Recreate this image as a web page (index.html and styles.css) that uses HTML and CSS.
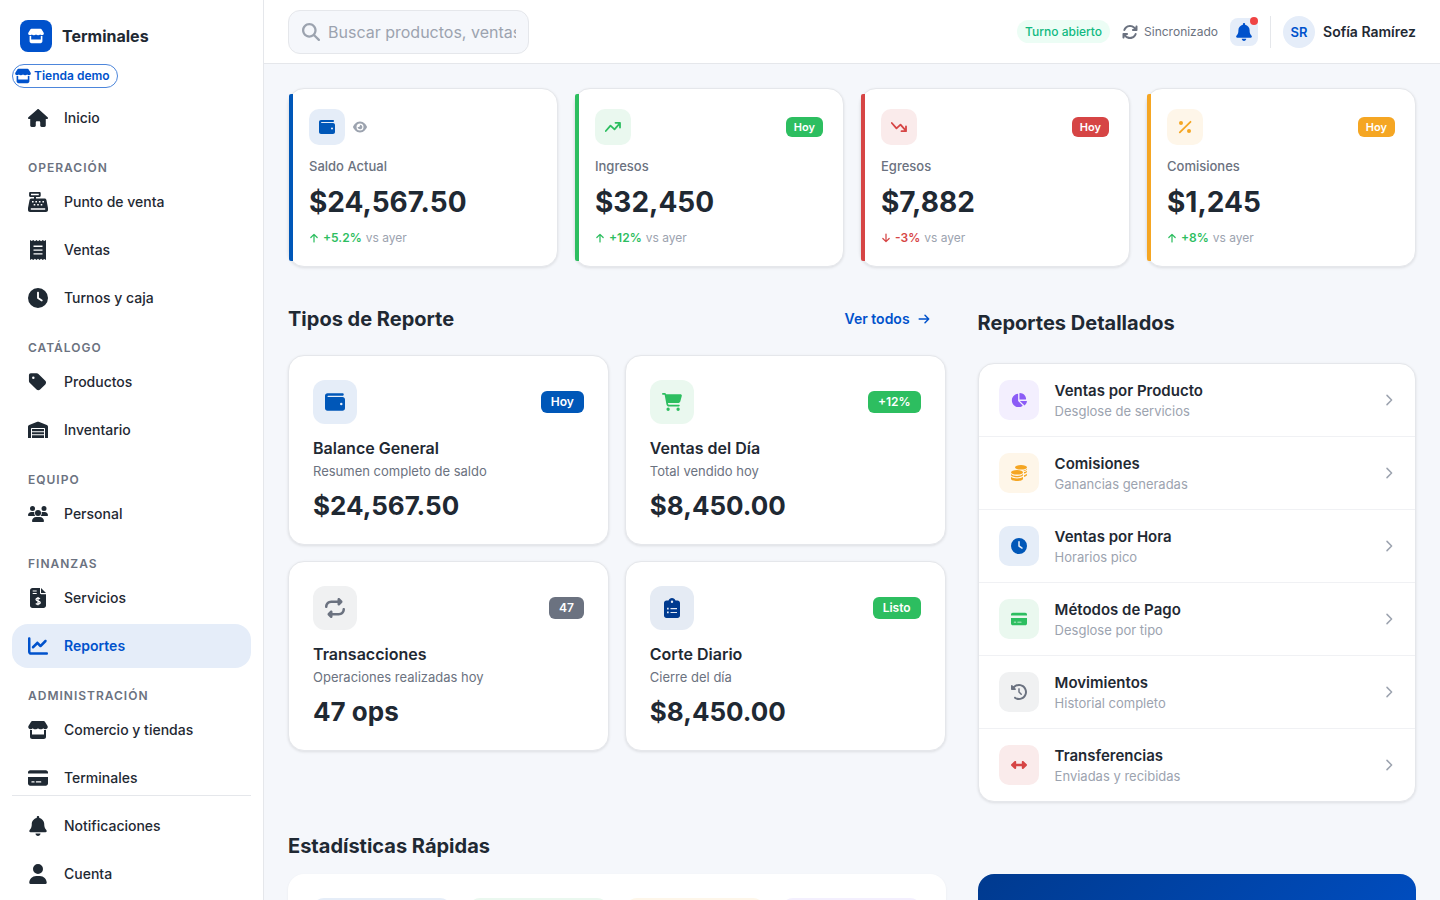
FILE: index.html
```html
<!DOCTYPE html>
<html lang="es">
<head>
    <meta charset="UTF-8">
    <meta name="viewport" content="width=device-width, initial-scale=1.0">
    <title>Reportes - Terminales</title>
    <link rel="stylesheet" href="styles.css">
</head>
<body>
    <!-- Icon sprite -->
    <svg class="sprite" aria-hidden="true">
        <symbol id="i-store" viewBox="0 0 20 20"><path fill-rule="evenodd" d="M4.3 1h11.4c.5 0 1 .3 1.2.7l2.5 4c1 1.700-.1 3.500-2 3.500-.9 0-1.700-.4-2.200-1-.5.6-1.300 1-2.500 1s-2-.4-2.700-1c-.7.6-1.500 1-2.700 1s-2-.4-2.500-1c-.5.6-1.300 1-2.200 1C.7 9.200-.4 7.400.6 5.700l2.500-4c.2-.4.7-.7 1.200-.7zM2 10h2v4.500h12V10h2v6.700c0 1.300-1 2.300-2.300 2.300H4.300C3 19 2 18 2 16.700z"/></symbol>
        <symbol id="i-home" viewBox="0 0 576 512"><path d="M575.8 255.500c0 18-15 32.100-32 32.100l-32 0 .7 160.200c0 2.700-.2 5.400-.5 8.100l0 16.200c0 22.100-17.900 40-40 40l-16 0c-1.100 0-2.200 0-3.300-.1c-1.400 .1-2.800 .1-4.200 .1L416 512l-24 0c-22.100 0-40-17.900-40-40l0-24 0-64c0-17.700-14.300-32-32-32l-64 0c-17.700 0-32 14.300-32 32l0 64 0 24c0 22.100-17.900 40-40 40l-24 0-31.900 0c-1.500 0-3-.1-4.500-.2c-1.200 .1-2.400 .2-3.600 .2l-16 0c-22.100 0-40-17.900-40-40l0-112c0-.9 0-1.900 .1-2.800l0-69.700-32 0c-18 0-32-14-32-32.100c0-9 3-17 10-24L266.400 8c7-7 15-8 22-8s15 2 21 7L564.800 231.500c8 7 12 15 11 24z"/></symbol>
        <symbol id="i-register" viewBox="0 0 20 20"><path fill-rule="evenodd" d="M2.300 0h9.200c.7 0 1.200.5 1.200 1.200v2.600c0 .7-.5 1.200-1.200 1.200H8v1.500h8.500c1 0 1.800.7 2 1.700l1.400 7.300c.1.400.1.700.1 1V18c0 1.100-.9 2-2 2H2c-1.100 0-2-.9-2-2v-1.500c0-.3 0-.6.1-1l1.400-7.300c.2-1 1-1.700 2-1.700H6V5H2.300c-.7 0-1.200-.5-1.200-1.200V1.200C1.100.5 1.600 0 2.300 0zm.7 1.800v1.400h7.800V1.800zM2.800 16.300v1.500h14.400v-1.500zM4 9v1.500h1.600V9zm3.400 0v1.500H9V9zm3.500 0v1.500h1.600V9zm3.500 0v1.500H16V9zM5.700 12v1.500h1.600V12zm3.500 0v1.500h1.600V12zm3.500 0v1.500h1.600V12z"/></symbol>
        <symbol id="i-receipt" viewBox="0 0 20 20"><path fill-rule="evenodd" d="M2 0l1.700 1L5.300 0l1.600 1.300L8.500 0 10 1.300 11.500 0l1.600 1.300L14.700 0l1.600 1L18 0v20l-1.700-1-1.600 1-1.600-1.300-1.600 1.300-1.500-1.300L8.500 20l-1.600-1.300L5.300 20l-1.600-1L2 20zM5.500 5.600v1.300h9V5.600zm0 3.800v1.300h9V9.400zm0 3.800v1.300h9v-1.300z"/></symbol>
        <symbol id="i-clock" viewBox="0 0 512 512"><path d="M256 0a256 256 0 1 1 0 512A256 256 0 1 1 256 0zM232 120l0 136c0 8 4 15.500 10.700 20l96 64c11 7.400 25.900 4.400 33.300-6.700s4.400-25.900-6.700-33.300L280 243.200 280 120c0-13.300-10.700-24-24-24s-24 10.700-24 24z"/></symbol>
        <symbol id="i-tag" viewBox="-24 0 512 512"><path d="M0 80L0 229.500c0 17 6.700 33.300 18.700 45.300l176 176c25 25 65.500 25 90.500 0L418.700 317.300c25-25 25-65.500 0-90.500l-176-176c-12-12-28.300-18.700-45.300-18.700L48 32C21.500 32 0 53.500 0 80zm112 32a32 32 0 1 1 0 64 32 32 0 1 1 0-64z"/></symbol>
        <symbol id="i-warehouse" viewBox="0 0 20 20"><path d="M0 18V6.800C0 6 .5 5.300 1.200 5l8.100-3.200c.5-.2 1-.2 1.400 0L18.800 5c.7.300 1.200 1 1.200 1.800V18h-3V9c0-.6-.4-1-1-1H4c-.6 0-1 .4-1 1v9z"/><path d="M4 9h12v2.300H4zM4 12.300h12v2H4zM4 15.300h12V18H4z"/></symbol>
        <symbol id="i-users" viewBox="0 0 20 20"><circle cx="4.500" cy="4.500" r="2.500"/><circle cx="16" cy="4.500" r="2.500"/><circle cx="10" cy="9" r="3"/><path d="M3.300 8h2.500c.1 0 .4 0 .6.100C6 9.500 6.300 11 7.300 12H.7c-.4 0-.7-.3-.7-.7C0 9.500 1.500 8 3.300 8zM16.700 8c1.800 0 3.300 1.500 3.300 3.300 0 .4-.3.7-.7.7h-6.600c1-1 1.300-2.500.9-3.900.2-.1.500-.1.700-.1zM8.200 13h3.600c2.300 0 4.200 1.900 4.200 4.200 0 .5-.4.8-.8.800H4.800c-.4 0-.8-.3-.8-.8C4 14.900 5.900 13 8.200 13z"/></symbol>
        <symbol id="i-invoice" viewBox="0 0 20 20"><path fill-rule="evenodd" d="M4.500 0H12v5c0 .7.500 1.200 1.200 1.200H18v11.300c0 1.400-1.100 2.500-2.500 2.500h-11C3.100 20 2 18.900 2 17.500v-15C2 1.100 3.100 0 4.500 0zM4.700 2.400v1.200h4V2.400zm0 2.500v1.200h4V4.900z"/><path d="M13 0l5 5h-5z"/><path class="cut" d="M12 10.700c-.5-.4-1.200-.6-2-.6-1.200 0-2 .5-2 1.400 0 2.100 4.200 1 4.200 3.100 0 .9-.9 1.500-2.200 1.500-.9 0-1.700-.3-2.200-.7M10 9v8.300"/></symbol>
        <symbol id="i-chart" viewBox="0 0 512 512"><path d="M64 64c0-17.700-14.300-32-32-32S0 46.300 0 64L0 400c0 44.200 35.800 80 80 80l400 0c17.700 0 32-14.300 32-32s-14.300-32-32-32L80 416c-8.800 0-16-7.200-16-16L64 64zm406.600 86.600c12.500-12.500 12.500-32.800 0-45.300s-32.800-12.500-45.300 0L320 210.700l-57.400-57.400c-12.500-12.500-32.800-12.500-45.300 0l-112 112c-12.500 12.500-12.500 32.800 0 45.300s32.800 12.500 45.300 0L240 221.300l57.400 57.400c12.500 12.500 32.800 12.500 45.300 0l128-128z"/></symbol>
        <symbol id="i-card" viewBox="0 0 576 512"><path d="M64 32C28.700 32 0 60.700 0 96l0 32 576 0 0-32c0-35.300-28.700-64-64-64L64 32zM576 224L0 224 0 416c0 35.300 28.700 64 64 64l448 0c35.300 0 64-28.700 64-64l0-192zM112 352l64 0c8.800 0 16 7.200 16 16s-7.200 16-16 16l-64 0c-8.800 0-16-7.200-16-16s7.200-16 16-16zm112 16c0-8.800 7.200-16 16-16l128 0c8.800 0 16 7.200 16 16s-7.200 16-16 16l-128 0c-8.800 0-16-7.200-16-16z"/></symbol>
        <symbol id="i-bell" viewBox="0 0 448 512"><path d="M224 0c-17.700 0-32 14.300-32 32l0 19.200C119 66 64 130.600 64 208l0 18.800c0 47-17.300 92.400-48.500 127.600l-7.400 8.300c-8.400 9.400-10.400 22.900-5.300 34.400S19.400 416 32 416l384 0c12.600 0 24-7.400 29.200-18.900s3.100-25-5.300-34.400l-7.400-8.300C401.300 319.200 384 273.900 384 226.800l0-18.800c0-77.400-55-142-128-156.800L256 32c0-17.700-14.300-32-32-32zm45.300 493.300c12-12 18.700-28.300 18.700-45.300l-64 0-64 0c0 17 6.700 33.300 18.700 45.300s28.300 18.700 45.300 18.700s33.300-6.700 45.300-18.700z"/></symbol>
        <symbol id="i-user" viewBox="0 0 448 512"><path d="M224 256A128 128 0 1 0 224 0a128 128 0 1 0 0 256zm-45.700 48C79.800 304 0 383.800 0 482.300C0 498.700 13.300 512 29.700 512l388.600 0c16.400 0 29.700-13.300 29.700-29.700C448 383.800 368.200 304 269.700 304l-91.400 0z"/></symbol>
        <symbol id="i-search" viewBox="0 0 512 512"><path d="M416 208c0 45.900-14.900 88.300-40 122.700L502.600 457.400c12.500 12.500 12.500 32.800 0 45.300s-32.800 12.500-45.300 0L330.700 376c-34.400 25.200-76.800 40-122.700 40C93.100 416 0 322.900 0 208S93.100 0 208 0S416 93.100 416 208zM208 352a144 144 0 1 0 0-288 144 144 0 1 0 0 288z"/></symbol>
        <symbol id="i-sync" viewBox="0 0 512 512"><path d="M105.100 202.600c7.700-21.800 20.200-42.300 37.800-59.800c62.500-62.500 163.800-62.500 226.300 0L386.300 160 352 160c-17.700 0-32 14.300-32 32s14.300 32 32 32l111.900 0c17.700 0 32-14.300 32-32l0-112c0-17.700-14.300-32-32-32s-32 14.300-32 32l0 35.200L414.400 97.600c-87.500-87.500-229.300-87.500-316.800 0C73.200 122 55.600 150.700 44.800 181.400c-5.900 16.700 2.900 34.900 19.500 40.800s34.900-2.900 40.800-19.500zM39 289.300c-5 1.500-9.800 4.200-13.700 8.200c-4 4-6.700 8.800-8.100 14c-.3 1.200-.6 2.500-.8 3.800c-.3 1.700-.4 3.400-.4 5.100L16 432c0 17.700 14.300 32 32 32s32-14.300 32-32l0-35.100 17.600 17.500c87.500 87.400 229.300 87.400 316.700 0c24.400-24.400 42.100-53.100 52.900-83.800c5.900-16.700-2.900-34.900-19.500-40.800s-34.900 2.900-40.800 19.500c-7.700 21.800-20.200 42.300-37.800 59.800c-62.500 62.500-163.800 62.500-226.300 0l-.1-.1L125.600 352l34.400 0c17.700 0 32-14.300 32-32s-14.300-32-32-32L48.400 288c-1.600 0-3.200 .1-4.800 .3s-3.100 .5-4.600 1z"/></symbol>
        <symbol id="i-wallet" viewBox="0 0 512 512"><path d="M64 32C28.700 32 0 60.700 0 96L0 416c0 35.300 28.700 64 64 64l384 0c35.300 0 64-28.700 64-64l0-224c0-35.300-28.700-64-64-64L80 128c-8.800 0-16-7.200-16-16s7.200-16 16-16l368 0c17.700 0 32-14.300 32-32s-14.300-32-32-32L64 32zM416 272a32 32 0 1 1 0 64 32 32 0 1 1 0-64z"/></symbol>
        <symbol id="i-eye" viewBox="0 0 576 512"><path d="M288 32c-80.800 0-145.500 36.800-192.600 80.600C48.600 156 17.300 208 2.500 243.700c-3.300 7.900-3.300 16.700 0 24.600C17.300 304 48.600 356 95.400 399.400C142.500 443.200 207.200 480 288 480s145.500-36.800 192.600-80.600c46.800-43.500 78.100-95.400 93-131.100c3.300-7.900 3.300-16.700 0-24.600c-14.900-35.700-46.200-87.700-93-131.100C433.500 68.800 368.800 32 288 32zM144 256a144 144 0 1 1 288 0 144 144 0 1 1 -288 0zm144-64c0 35.300-28.700 64-64 64c-7.100 0-13.900-1.200-20.300-3.300c-5.500-1.800-11.900 1.600-11.700 7.400c.3 6.900 1.300 13.800 3.200 20.700c13.700 51.200 66.400 81.600 117.600 67.900s81.600-66.400 67.900-117.600c-11.100-41.500-47.800-69.400-88.600-71.100c-5.800-.2-9.200 6.100-7.400 11.700c2.100 6.400 3.300 13.200 3.300 20.300z"/></symbol>
        <symbol id="i-up" viewBox="0 0 16 16"><path class="line" d="M.8 12l4.700-5.300 4 3.600L15 4.200M10.500 3.800H15v4.700"/></symbol>
        <symbol id="i-down" viewBox="0 0 16 16"><path class="line" d="M.8 4l4.700 5.300 4-3.600L15 11.800M10.500 12.200H15V7.500"/></symbol>
        <symbol id="i-percent" viewBox="0 0 16 16"><path class="line" d="M13.500 2.800L2.800 13.400"/><circle cx="4" cy="4" r="2"/><circle cx="12" cy="12" r="2"/></symbol>
        <symbol id="i-arrow-up" viewBox="0 0 12 12"><path class="line-sm" d="M6 10.700V2M2.200 5.400L6 1.600l3.800 3.800"/></symbol>
        <symbol id="i-arrow-down" viewBox="0 0 12 12"><path class="line-sm" d="M6 1.300V10M2.200 6.600L6 10.400l3.800-3.800"/></symbol>
        <symbol id="i-arrow-right" viewBox="0 0 12 12"><path class="line-sm" d="M1.200 6h9.500M7 2.300L10.700 6 7 9.700"/></symbol>
        <symbol id="i-chevron" viewBox="0 0 12 12"><path class="line-sm" d="M4 1.400L8.600 6 4 10.600"/></symbol>
        <symbol id="i-cart" viewBox="0 0 576 512"><path d="M0 24C0 10.700 10.700 0 24 0L69.500 0c22 0 41.500 12.800 50.600 32l411 0c26.300 0 45.500 25 38.600 50.400l-41 152.300c-8.500 31.400-37 53.300-69.500 53.300l-288.500 0 5.400 28.500c2.200 11.300 12.100 19.500 23.600 19.500L488 336c13.300 0 24 10.700 24 24s-10.700 24-24 24l-288.300 0c-34.600 0-64.300-24.600-70.700-58.500L77.400 54.500c-.7-3.800-4-6.500-7.900-6.500L24 48C10.700 48 0 37.300 0 24zM128 464a48 48 0 1 1 96 0 48 48 0 1 1 -96 0zm336-48a48 48 0 1 1 0 96 48 48 0 1 1 0-96z"/></symbol>
        <symbol id="i-repeat" viewBox="0 0 512 512"><path d="M0 224c0 17.700 14.300 32 32 32s32-14.300 32-32c0-53 43-96 96-96l160 0 0 32c0 12.900 7.800 24.600 19.800 29.600s25.700 2.200 34.900-6.900l64-64c12.500-12.500 12.500-32.800 0-45.300l-64-64c-9.200-9.200-22.900-11.900-34.900-6.900S320 19.100 320 32l0 32L160 64C71.600 64 0 135.600 0 224zm512 64c0-17.700-14.300-32-32-32s-32 14.300-32 32c0 53-43 96-96 96l-160 0 0-32c0-12.900-7.800-24.600-19.800-29.600s-25.700-2.200-34.900 6.900l-64 64c-12.500 12.500-12.500 32.800 0 45.300l64 64c9.200 9.200 22.900 11.900 34.900 6.900s19.800-16.600 19.800-29.600l0-32 160 0c88.400 0 160-71.600 160-160z"/></symbol>
        <symbol id="i-clipboard" viewBox="0 0 20 20"><path fill-rule="evenodd" d="M10 0c1.600 0 3 1 3.500 2.500h2C16.900 2.500 18 3.600 18 5v12.500c0 1.400-1.100 2.500-2.500 2.500h-11C3.100 20 2 18.900 2 17.500V5c0-1.400 1.100-2.500 2.500-2.500h2C7 1 8.400 0 10 0zm0 2.500a1.200 1.200 0 1 0 0 2.400 1.200 1.200 0 1 0 0-2.400zM5 9.700v1.700h1.700V9.700zm3.500.3v1.200H15V10zM5 13.600v1.700h1.700v-1.700zm3.500.3v1.200H15v-1.200z"/></symbol>
        <symbol id="i-pie" viewBox="0 0 576 512"><path d="M304 240l0-223.400c0-9 7-16.600 16-16.600C443.700 0 544 100.300 544 224c0 9-7.600 16-16.600 16L304 240zM32 272C32 150.700 122.100 50.300 239 34.300c9.200-1.300 17 6.100 17 15.400L256 288 412.500 444.500c6.700 6.700 6.200 17.700-1.500 23.100C371.800 495.600 323.800 512 272 512C139.500 512 32 404.600 32 272zm526.400 16c9.300 0 16.600 7.800 15.400 17c-7.700 55.900-34.600 105.600-73.900 142.300c-6 5.600-15.400 5.200-21.200-.7L320 288l238.400 0z"/></symbol>
        <symbol id="i-coins" viewBox="0 0 16 16"><ellipse cx="10" cy="2.300" rx="6" ry="2.300"/><ellipse cx="6" cy="7.300" rx="6" ry="2.300"/><path d="M0 9c1 1.300 3.300 1.900 6 1.900S11 10.300 12 9v1c0 1.200-2.700 2.200-6 2.200S0 11.200 0 10zM0 11.700c1 1.100 3.300 1.700 6 1.700s5-.6 6-1.700v2C12 15 9.300 16 6 16s-6-1-6-2.300zM13 7.100c1.300-.3 2.400-.8 3-1.400v1c0 .8-1.200 1.500-3 1.900zM13 10.200c1.300-.3 2.400-.8 3-1.400v1.200c0 .8-1.200 1.500-3 1.900zM12.300 5.700C13.900 5.300 15.400 4.700 16 3.800v.5c0 .7-1.200 1.500-3 1.900z"/></symbol>
        <symbol id="i-history" viewBox="0 0 512 512"><path d="M75 75L41 41C25.900 25.900 0 36.600 0 57.900L0 168c0 13.300 10.700 24 24 24l110.100 0c21.400 0 32.100-25.900 17-41l-30.800-30.800C155 85.500 203 64 256 64c106 0 192 86 192 192s-86 192-192 192c-40.800 0-78.600-12.700-109.700-34.400c-14.500-10.100-34.400-6.600-44.600 7.900s-6.600 34.400 7.900 44.600C151.200 495 201.700 512 256 512c141.400 0 256-114.600 256-256S397.400 0 256 0C185.300 0 121.300 28.700 75 75zm181 53c-13.300 0-24 10.700-24 24l0 104c0 6.400 2.500 12.500 7 17l72 72c9.400 9.400 24.600 9.400 33.900 0s9.400-24.600 0-33.900l-65-65 0-94.100c0-13.300-10.700-24-24-24z"/></symbol>
        <symbol id="i-transfer" viewBox="0 0 16 16"><path d="M4.600 4.100c.4.100.6.500.6.900v1.800h5.600V5c0-.4.200-.8.600-.9.400-.2.800-.1 1.100.2l3.200 3c.4.400.4 1 0 1.400l-3.200 3c-.3.300-.7.400-1.100.2-.4-.1-.6-.5-.6-.9V9.200H5.200V11c0 .4-.2.800-.6.900-.4.200-.8.100-1.100-.2l-3.200-3c-.4-.4-.4-1 0-1.400l3.200-3c.3-.3.700-.4 1.100-.2z"/></symbol>
    </svg>

    <div class="app">
        <aside class="sidebar">
            <div class="brand">
                <span class="brand-logo"><svg class="icon icon-16"><use href="#i-store"/></svg></span>
                <span class="brand-name">Terminales</span>
            </div>
            <button type="button" class="store-pill">
                <svg class="icon icon-16"><use href="#i-store"/></svg>
                <span>Tienda demo</span>
            </button>

            <nav class="nav" aria-label="Principal">
                <a href="#" class="nav-item"><svg class="icon icon-20"><use href="#i-home"/></svg>Inicio</a>

                <h3 class="nav-title">Operación</h3>
                <a href="#" class="nav-item"><svg class="icon icon-20"><use href="#i-register"/></svg>Punto de venta</a>
                <a href="#" class="nav-item"><svg class="icon icon-20"><use href="#i-receipt"/></svg>Ventas</a>
                <a href="#" class="nav-item"><svg class="icon icon-20"><use href="#i-clock"/></svg>Turnos y caja</a>

                <h3 class="nav-title">Catálogo</h3>
                <a href="#" class="nav-item"><svg class="icon icon-20"><use href="#i-tag"/></svg>Productos</a>
                <a href="#" class="nav-item"><svg class="icon icon-20"><use href="#i-warehouse"/></svg>Inventario</a>

                <h3 class="nav-title">Equipo</h3>
                <a href="#" class="nav-item"><svg class="icon icon-20"><use href="#i-users"/></svg>Personal</a>

                <h3 class="nav-title">Finanzas</h3>
                <a href="#" class="nav-item"><svg class="icon icon-20"><use href="#i-invoice"/></svg>Servicios</a>
                <a href="#" class="nav-item active" aria-current="page"><svg class="icon icon-20"><use href="#i-chart"/></svg>Reportes</a>

                <h3 class="nav-title">Administración</h3>
                <a href="#" class="nav-item"><svg class="icon icon-20"><use href="#i-store"/></svg>Comercio y tiendas</a>
                <a href="#" class="nav-item"><svg class="icon icon-20"><use href="#i-card"/></svg>Terminales</a>
            </nav>

            <div class="nav-footer">
                <a href="#" class="nav-item"><svg class="icon icon-20"><use href="#i-bell"/></svg>Notificaciones</a>
                <a href="#" class="nav-item"><svg class="icon icon-20"><use href="#i-user"/></svg>Cuenta</a>
            </div>
        </aside>

        <div class="main">
            <header class="topbar">
                <label class="search">
                    <svg class="icon icon-18"><use href="#i-search"/></svg>
                    <input type="text" class="search-input" aria-label="Buscar" placeholder="Buscar productos, ventas...">
                </label>
                <div class="topbar-right">
                    <span class="shift">Turno abierto</span>
                    <span class="sync"><svg class="icon icon-16"><use href="#i-sync"/></svg>Sincronizado</span>
                    <button type="button" class="bell" aria-label="Notificaciones">
                        <svg class="icon icon-18"><use href="#i-bell"/></svg>
                        <span class="bell-dot"></span>
                    </button>
                    <button type="button" class="profile">
                        <span class="avatar">SR</span>
                        <span class="profile-name">Sofía Ramírez</span>
                    </button>
                </div>
            </header>

            <main class="content">
                <section class="kpis">
                    <article class="kpi kpi-blue">
                        <div class="card-top">
                            <span class="tile tile-36 blue"><svg class="icon icon-16"><use href="#i-wallet"/></svg></span>
                            <button type="button" class="eye" aria-label="Ocultar saldo"><svg class="icon icon-14"><use href="#i-eye"/></svg></button>
                        </div>
                        <p class="kpi-label">Saldo Actual</p>
                        <p class="kpi-value">$24,567.50</p>
                        <p class="kpi-change"><svg class="icon icon-10 up"><use href="#i-arrow-up"/></svg><b class="up">+5.2%</b>vs ayer</p>
                    </article>
                    <article class="kpi kpi-green">
                        <div class="card-top">
                            <span class="tile tile-36 green"><svg class="icon icon-16"><use href="#i-up"/></svg></span>
                            <span class="badge badge-sm bg-green">Hoy</span>
                        </div>
                        <p class="kpi-label">Ingresos</p>
                        <p class="kpi-value">$32,450</p>
                        <p class="kpi-change"><svg class="icon icon-10 up"><use href="#i-arrow-up"/></svg><b class="up">+12%</b>vs ayer</p>
                    </article>
                    <article class="kpi kpi-red">
                        <div class="card-top">
                            <span class="tile tile-36 red"><svg class="icon icon-16"><use href="#i-down"/></svg></span>
                            <span class="badge badge-sm bg-red">Hoy</span>
                        </div>
                        <p class="kpi-label">Egresos</p>
                        <p class="kpi-value">$7,882</p>
                        <p class="kpi-change"><svg class="icon icon-10 down"><use href="#i-arrow-down"/></svg><b class="down">-3%</b>vs ayer</p>
                    </article>
                    <article class="kpi kpi-orange">
                        <div class="card-top">
                            <span class="tile tile-36 orange"><svg class="icon icon-16"><use href="#i-percent"/></svg></span>
                            <span class="badge badge-sm bg-orange">Hoy</span>
                        </div>
                        <p class="kpi-label">Comisiones</p>
                        <p class="kpi-value">$1,245</p>
                        <p class="kpi-change"><svg class="icon icon-10 up"><use href="#i-arrow-up"/></svg><b class="up">+8%</b>vs ayer</p>
                    </article>
                </section>

                <div class="columns">
                    <section>
                        <div class="section-head">
                            <h2>Tipos de Reporte</h2>
                            <a href="#" class="see-all">Ver todos <svg class="icon icon-12"><use href="#i-arrow-right"/></svg></a>
                        </div>
                        <div class="reports">
                            <article class="report">
                                <div class="card-top">
                                    <span class="tile tile-44 blue"><svg class="icon icon-20"><use href="#i-wallet"/></svg></span>
                                    <span class="badge bg-blue">Hoy</span>
                                </div>
                                <h3>Balance General</h3>
                                <p class="report-desc">Resumen completo de saldo</p>
                                <p class="report-value">$24,567.50</p>
                            </article>
                            <article class="report">
                                <div class="card-top">
                                    <span class="tile tile-44 green"><svg class="icon icon-20"><use href="#i-cart"/></svg></span>
                                    <span class="badge bg-green">+12%</span>
                                </div>
                                <h3>Ventas del Día</h3>
                                <p class="report-desc">Total vendido hoy</p>
                                <p class="report-value">$8,450.00</p>
                            </article>
                            <article class="report">
                                <div class="card-top">
                                    <span class="tile tile-44 gray"><svg class="icon icon-20"><use href="#i-repeat"/></svg></span>
                                    <span class="badge bg-gray">47</span>
                                </div>
                                <h3>Transacciones</h3>
                                <p class="report-desc">Operaciones realizadas hoy</p>
                                <p class="report-value">47 ops</p>
                            </article>
                            <article class="report">
                                <div class="card-top">
                                    <span class="tile tile-44 navy"><svg class="icon icon-20"><use href="#i-clipboard"/></svg></span>
                                    <span class="badge bg-green">Listo</span>
                                </div>
                                <h3>Corte Diario</h3>
                                <p class="report-desc">Cierre del día</p>
                                <p class="report-value">$8,450.00</p>
                            </article>
                        </div>
                    </section>

                    <section>
                        <div class="section-head section-head-tall">
                            <h2>Reportes Detallados</h2>
                        </div>
                        <div class="detail-list">
                            <a href="#" class="detail">
                                <span class="tile tile-40 purple"><svg class="icon icon-16"><use href="#i-pie"/></svg></span>
                                <span class="detail-text"><strong>Ventas por Producto</strong><small>Desglose de servicios</small></span>
                                <svg class="icon icon-12"><use href="#i-chevron"/></svg>
                            </a>
                            <a href="#" class="detail">
                                <span class="tile tile-40 orange"><svg class="icon icon-16"><use href="#i-coins"/></svg></span>
                                <span class="detail-text"><strong>Comisiones</strong><small>Ganancias generadas</small></span>
                                <svg class="icon icon-12"><use href="#i-chevron"/></svg>
                            </a>
                            <a href="#" class="detail">
                                <span class="tile tile-40 blue"><svg class="icon icon-16"><use href="#i-clock"/></svg></span>
                                <span class="detail-text"><strong>Ventas por Hora</strong><small>Horarios pico</small></span>
                                <svg class="icon icon-12"><use href="#i-chevron"/></svg>
                            </a>
                            <a href="#" class="detail">
                                <span class="tile tile-40 green"><svg class="icon icon-16"><use href="#i-card"/></svg></span>
                                <span class="detail-text"><strong>Métodos de Pago</strong><small>Desglose por tipo</small></span>
                                <svg class="icon icon-12"><use href="#i-chevron"/></svg>
                            </a>
                            <a href="#" class="detail">
                                <span class="tile tile-40 gray"><svg class="icon icon-16"><use href="#i-history"/></svg></span>
                                <span class="detail-text"><strong>Movimientos</strong><small>Historial completo</small></span>
                                <svg class="icon icon-12"><use href="#i-chevron"/></svg>
                            </a>
                            <a href="#" class="detail">
                                <span class="tile tile-40 red"><svg class="icon icon-16"><use href="#i-transfer"/></svg></span>
                                <span class="detail-text"><strong>Transferencias</strong><small>Enviadas y recibidas</small></span>
                                <svg class="icon icon-12"><use href="#i-chevron"/></svg>
                            </a>
                        </div>
                    </section>
                </div>

                <h2 class="stats-title">Estadísticas Rápidas</h2>
                <div class="columns">
                    <div class="stats">
                        <div class="stat blue"></div>
                        <div class="stat green"></div>
                        <div class="stat orange"></div>
                        <div class="stat purple"></div>
                    </div>
                    <div class="promo"></div>
                </div>
            </main>
        </div>
    </div>
</body>
</html>
```
FILE: styles.css
```css
* {
    margin: 0;
    padding: 0;
    box-sizing: border-box;
}

body {
    font-family: Inter, 'Liberation Sans', sans-serif;
    font-size: 14px;
    color: #1f2933;
    background: #f5f7fb;
}

a {
    color: inherit;
    text-decoration: none;
}

button {
    font: inherit;
    color: inherit;
    background: none;
    border: none;
    cursor: pointer;
}

h2 {
    font-size: 20px;
    font-weight: 700;
    line-height: 24px;
}

/* Icons */
.sprite {
    display: none;
}

.icon {
    fill: currentColor;
    flex-shrink: 0;
}

.icon-10 { width: 10px; height: 10px; }
.icon-12 { width: 12px; height: 12px; }
.icon-14 { width: 14px; height: 14px; }
.icon-16 { width: 16px; height: 16px; }
.icon-18 { width: 18px; height: 18px; }
.icon-20 { width: 20px; height: 20px; }

.line,
.line-sm {
    fill: none;
    stroke: currentColor;
    stroke-width: 1.8;
    stroke-linecap: round;
    stroke-linejoin: round;
}

.line-sm {
    stroke-width: 1.5;
}

.cut {
    fill: none;
    stroke: white;
    stroke-width: 1.3;
}

/* Layout */
.app {
    display: flex;
    height: 100vh;
}

.main {
    flex: 1;
    min-width: 0;
    display: flex;
    flex-direction: column;
}

/* Sidebar */
.sidebar {
    width: 264px;
    flex-shrink: 0;
    display: flex;
    flex-direction: column;
    padding: 20px 12px 4px;
    background: white;
    border-right: 1px solid #e5e7eb;
}

.brand {
    display: flex;
    align-items: center;
    gap: 10px;
    padding: 0 8px;
    margin-bottom: 12px;
}

.brand-logo {
    width: 32px;
    height: 32px;
    display: flex;
    align-items: center;
    justify-content: center;
    background: #0052cc;
    color: white;
    border-radius: 8px;
}

.brand-name {
    font-size: 16px;
    font-weight: 700;
}

.store-pill {
    align-self: flex-start;
    display: flex;
    align-items: center;
    gap: 3px;
    height: 24px;
    flex-shrink: 0;
    padding: 0 7px 0 2px;
    margin-bottom: 8px;
    border: 1px solid #4d86db;
    border-radius: 12px;
    color: #0052cc;
    font-size: 12px;
    font-weight: 600;
    line-height: 20px;
}

.nav {
    flex: 1;
    min-height: 0;
    overflow: hidden;
}

.nav-item {
    display: flex;
    align-items: center;
    gap: 16px;
    height: 44px;
    padding: 0 16px;
    border-radius: 16px;
    font-weight: 500;
    line-height: 20px;
}

.nav-item + .nav-item {
    margin-top: 4px;
}

.nav-item.active {
    background: #e5edf9;
    color: #0052cc;
    font-weight: 600;
}

.nav-title {
    padding: 20px 16px 4px;
    font-size: 12px;
    font-weight: 600;
    line-height: 16px;
    letter-spacing: 1px;
    text-transform: uppercase;
    color: #6b7280;
}

.nav-footer {
    border-top: 1px solid #e5e7eb;
    padding-top: 8px;
}

/* Top bar */
.topbar {
    display: flex;
    align-items: center;
    justify-content: space-between;
    height: 64px;
    flex-shrink: 0;
    padding: 0 24px;
    background: white;
    border-bottom: 1px solid #e5e7eb;
}

.search {
    display: flex;
    align-items: center;
    gap: 8px;
    width: 241px;
    height: 44px;
    padding: 0 12px 0 13px;
    background: #f5f7fb;
    border: 1px solid #e5e7eb;
    border-radius: 12px;
    color: #9ca3af;
}

.search-input {
    flex: 1;
    min-width: 0;
    height: 20px;
    border: none;
    outline: none;
    background: none;
    font: inherit;
    font-size: 16px;
    color: #1f2933;
}

.search-input::placeholder {
    color: #9ca3af;
}

.topbar-right {
    display: flex;
    align-items: center;
    gap: 12px;
}

.shift {
    padding: 4px 8px;
    border-radius: 12px;
    background: #ecfdf5;
    color: #10b981;
    font-size: 12px;
    font-weight: 500;
}

.sync {
    display: flex;
    align-items: center;
    gap: 6px;
    color: #6b7280;
    font-size: 12px;
}

.bell {
    position: relative;
    display: flex;
    align-items: center;
    justify-content: center;
    width: 28px;
    height: 28px;
    border-radius: 8px;
    background: #e5edf9;
    color: #0052cc;
}

.bell-dot {
    position: absolute;
    top: -1px;
    right: 0;
    width: 8px;
    height: 8px;
    border-radius: 50%;
    background: #ef4444;
}

.profile {
    display: flex;
    align-items: center;
    gap: 8px;
    padding-left: 12px;
    border-left: 1px solid #e5e7eb;
    font-size: 14px;
    font-weight: 600;
}

.avatar {
    width: 32px;
    height: 32px;
    line-height: 32px;
    border-radius: 50%;
    background: #e5edf9;
    color: #0052cc;
    font-size: 13px;
}

/* Content */
.content {
    flex: 1;
    min-height: 0;
    padding: 24px;
    overflow-y: auto;
    scrollbar-width: none;
}

.card-top {
    display: flex;
    align-items: center;
    justify-content: space-between;
    margin-bottom: 12px;
}

.tile {
    display: flex;
    align-items: center;
    justify-content: center;
    flex-shrink: 0;
    border-radius: 10px;
}

.tile-36 { width: 36px; height: 36px; }
.tile-40 { width: 40px; height: 40px; }
.tile-44 { width: 44px; height: 44px; border-radius: 12px; }

.blue { background: #e5edf8; color: #0057b8; }
.green { background: #eaf8ef; color: #2dbe60; }
.red { background: #faebeb; color: #d64545; }
.orange { background: #fef6e9; color: #f5a623; }
.purple { background: #f3effe; color: #8b5cf6; }
.gray { background: #f0f1f2; color: #6b7280; }
.navy { background: #e5ebf4; color: #003a8f; }

.badge {
    padding: 0 10px;
    border-radius: 6px;
    color: white;
    font-size: 12px;
    font-weight: 600;
    line-height: 22px;
}

.badge-sm {
    padding: 0 8px;
    font-size: 11px;
    line-height: 20px;
}

.bg-blue { background: #0057b8; }
.bg-green { background: #2dbe60; }
.bg-red { background: #d64545; }
.bg-orange { background: #f5a623; }
.bg-gray { background: #6b7280; }

.kpis {
    display: grid;
    grid-template-columns: repeat(4, 1fr);
    gap: 16px;
    margin-bottom: 32px;
}

.kpi,
.report,
.detail-list {
    background: white;
    border: 1px solid #e5e7eb;
    border-radius: 16px;
    box-shadow: 0 1px 3px rgba(0, 0, 0, 0.1);
}

.kpi {
    position: relative;
    padding: 20px;
}

.kpi::before {
    content: '';
    position: absolute;
    left: 0;
    top: 5px;
    bottom: 5px;
    width: 4px;
    border-radius: 2px 0 0 2px;
    background: #0057b8;
}

.kpi-green::before { background: #2dbe60; }
.kpi-red::before { background: #d64545; }
.kpi-orange::before { background: #f5a623; }

.kpi-blue .card-top {
    justify-content: flex-start;
    gap: 8px;
}

.eye {
    display: flex;
    color: #9ca3af;
}

.kpi-label {
    margin-bottom: 8px;
    font-size: 13px;
    font-weight: 500;
    line-height: 18px;
    color: #6b7280;
}

.kpi-value {
    margin-bottom: 8px;
    font-size: 28px;
    font-weight: 700;
    line-height: 38px;
}

.kpi-change {
    display: flex;
    align-items: center;
    gap: 4px;
    font-size: 12px;
    line-height: 17px;
    color: #9ca3af;
}

.kpi-change b {
    font-weight: 600;
}

.up { color: #2dbe60; }
.down { color: #d64545; }

.columns {
    display: grid;
    grid-template-columns: 3fr 2fr;
    gap: 32px;
}

.section-head {
    display: flex;
    align-items: center;
    justify-content: space-between;
    height: 40px;
    margin-bottom: 16px;
}

.section-head-tall {
    height: 48px;
}

.see-all {
    display: flex;
    align-items: center;
    gap: 8px;
    padding: 0 16px;
    color: #0052cc;
    font-weight: 600;
    line-height: 20px;
}

.reports {
    display: grid;
    grid-template-columns: repeat(2, 1fr);
    gap: 16px;
}

.report {
    padding: 24px;
}

.report h3 {
    margin-bottom: 2px;
    font-size: 16px;
    font-weight: 600;
    line-height: 24px;
}

.report-desc {
    margin-bottom: 12px;
    font-size: 13px;
    line-height: 18px;
    color: #6b7280;
}

.report-value {
    font-size: 26px;
    font-weight: 700;
    line-height: 28px;
}

.detail {
    display: flex;
    align-items: center;
    gap: 16px;
    padding: 16px 20px;
    color: #9ca3af;
}

.detail + .detail {
    border-top: 1px solid #f0f1f4;
}

.detail-text {
    flex: 1;
    display: flex;
    flex-direction: column;
}

.detail-text strong {
    font-size: 15px;
    font-weight: 600;
    line-height: 22px;
    color: #1f2933;
}

.detail-text small {
    font-size: 13px;
    line-height: 18px;
}

/* Quick stats */
.stats-title {
    margin: 32px 0 16px;
}

.stats {
    display: grid;
    grid-template-columns: repeat(4, 1fr);
    gap: 16px;
    padding: 24px;
    background: white;
    border-radius: 16px;
    box-shadow: 0 1px 3px rgba(0, 0, 0, 0.05);
}

.stat {
    min-height: 120px;
    border-radius: 12px;
}

.promo {
    border-radius: 16px;
    background: linear-gradient(135deg, #003a8f, #0052cc);
}
```
